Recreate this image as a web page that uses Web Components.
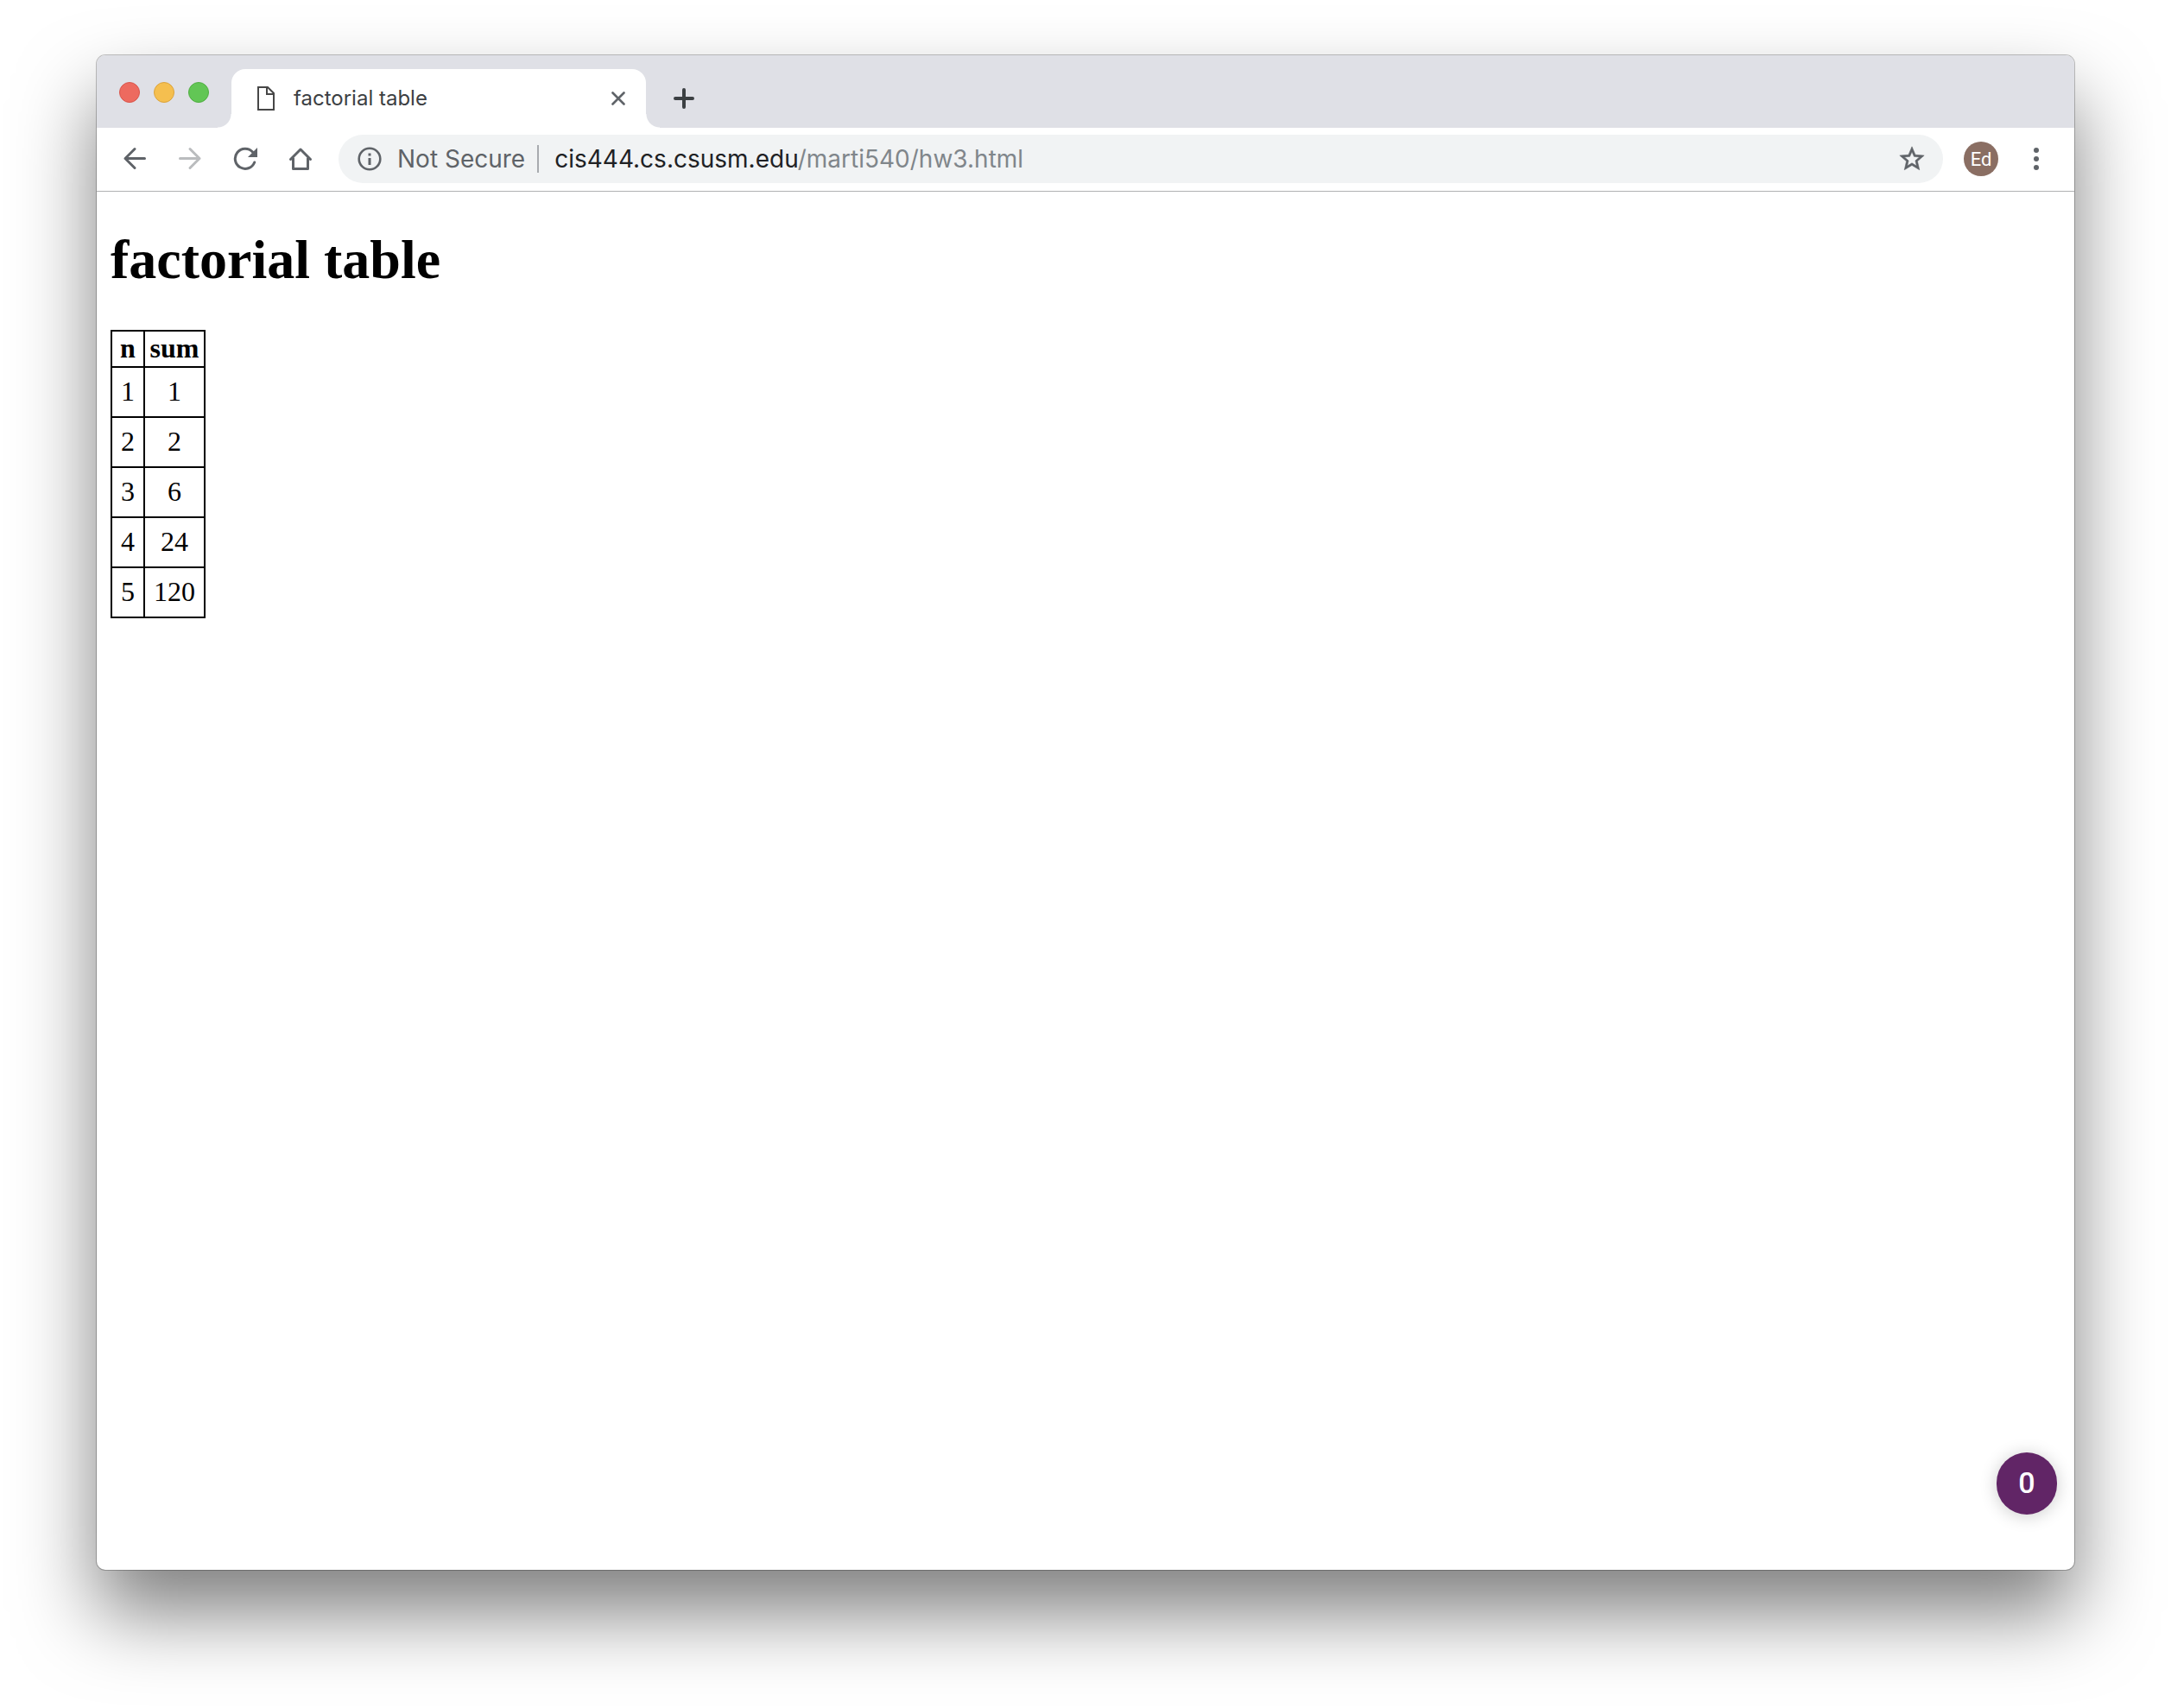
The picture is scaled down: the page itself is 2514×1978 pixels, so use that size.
<!DOCTYPE html>
<html lang="en">
<head>
<meta charset="utf-8">
<title>factorial table</title>
<style>
  html, body { margin: 0; background: #fff; }
  body { min-height: 100vh; display: flex; }
</style>
</head>
<body>
<browser-window>
  <tab-strip slot="tabs">
    <browser-tab>factorial table</browser-tab>
  </tab-strip>
  <tool-bar slot="toolbar">
    <address-bar>
      <span slot="status">Not Secure</span>
      <span slot="host">cis444.cs.csusm.edu</span>
      <span slot="path">/marti540/hw3.html</span>
    </address-bar>
  </tool-bar>
  <factorial-page count="5">factorial table</factorial-page>
  <count-badge slot="overlay">0</count-badge>
</browser-window>

<script>
const define = (name, html, setup) => {
  const template = document.createElement('template');
  template.innerHTML = html;
  customElements.define(name, class extends HTMLElement {
    constructor() {
      super();
      this.attachShadow({ mode: 'open' }).append(template.content.cloneNode(true));
    }
    connectedCallback() { if (setup) setup(this, this.shadowRoot); }
  });
};

define('browser-window', `
  <style>
    :host { flex: 1; display: flex; box-sizing: border-box; padding: 64px 112px 160px; font-family: Inter, "Liberation Sans", sans-serif; }
    .frame { position: relative; flex: 1; min-width: 0; display: flex; flex-direction: column; background: #fff; border-radius: 10px;
      box-shadow: 0 0 0 1px rgba(0,0,0,.24), 0 50px 90px rgba(0,0,0,.5); }
    main { flex: 1; }
    .overlay { position: absolute; right: 20px; bottom: 64px; }
  </style>
  <div class="frame">
    <slot name="tabs"></slot>
    <slot name="toolbar"></slot>
    <main><slot></slot></main>
    <div class="overlay"><slot name="overlay"></slot></div>
  </div>`);

define('tab-strip', `
  <style>
    :host { display: flex; align-items: flex-end; height: 84px; background: #dfe0e6; border-radius: 10px 10px 0 0; }
    .lights { align-self: center; display: flex; gap: 16px; padding: 2px 26px 0; }
    .lights button { width: 24px; height: 24px; padding: 0; border: 1px solid; border-radius: 50%; }
    .close { background: #ed6a5f; border-color: #d9554b !important; }
    .min { background: #f5bf4f; border-color: #dba33c !important; }
    .max { background: #62c655; border-color: #50ae42 !important; }
    .new { width: 56px; height: 68px; margin: 0 16px; padding: 0; border: 0; background: none; }
    svg { display: block; margin: auto; }
  </style>
  <div class="lights">
    <button class="close" aria-label="Close window"></button>
    <button class="min" aria-label="Minimize window"></button>
    <button class="max" aria-label="Zoom window"></button>
  </div>
  <slot></slot>
  <button class="new" aria-label="New tab">
    <svg width="24" height="24" viewBox="0 0 24 24" fill="none" stroke="#3c4043" stroke-width="4" stroke-linecap="round"><path d="M12 2v20M2 12h20"/></svg>
  </button>`);

define('browser-tab', `
  <style>
    :host { position: relative; display: flex; align-items: center; box-sizing: border-box; width: 480px; height: 68px; padding: 0 24px 0 30px;
      background: #fff; border-radius: 16px 16px 0 0; color: #3c4043; font-size: 24px; line-height: 32px; }
    :host::before, :host::after { content: ""; position: absolute; bottom: 0; width: 16px; height: 16px; }
    :host::before { right: 100%; background: radial-gradient(circle at 0 0, transparent 15px, #fff 16px); }
    :host::after { left: 100%; background: radial-gradient(circle at 100% 0, transparent 15px, #fff 16px); }
    .title { flex: 1; padding-left: 22px; }
    button { width: 16px; height: 16px; padding: 0; border: 0; background: none; }
    svg { display: block; }
  </style>
  <svg width="20" height="28" viewBox="0 0 20 28" fill="none" stroke="#474747" stroke-width="2"><path d="M1 1h11l7 7v19H1zM11 1v8h8"/></svg>
  <span class="title"><slot></slot></span>
  <button aria-label="Close tab">
    <svg width="16" height="16" viewBox="0 0 16 16" fill="none" stroke="#5f6368" stroke-width="2.600" stroke-linecap="round"><path d="M1.500 1.500l13 13M14.500 1.500l-13 13"/></svg>
  </button>`);

define('tool-bar', `
  <style>
    :host { display: flex; align-items: center; gap: 12px; height: 72px; padding: 0 12px 1px; background: #fff; border-bottom: 1px solid #b0b1b3; }
    nav { display: flex; }
    button { width: 64px; height: 56px; padding: 0; border: 0; background: none; display: flex; align-items: center; justify-content: center; font: inherit; }
    svg { display: block; fill: none; stroke: #5f6368; stroke-width: 3; }
    .off svg { stroke: #babcbe; }
    .avatar { width: 40px; height: 40px; line-height: 42px; border-radius: 50%; background: #8a6e63; color: #fff; font-family: Roboto, sans-serif; font-size: 22px; text-align: center; }
  </style>
  <nav>
    <button aria-label="Back"><svg width="28" height="28" viewBox="0 0 28 28" stroke-linecap="round" stroke-linejoin="round"><path d="M25.500 13.500H3M14 2.500L3 13.500l11 11"/></svg></button>
    <button class="off" aria-label="Forward"><svg width="28" height="28" viewBox="0 0 28 28" stroke-linecap="round" stroke-linejoin="round"><path d="M2.500 13.500H25M14 2.500l11 11-11 11"/></svg></button>
    <button aria-label="Reload"><svg width="28" height="28" viewBox="0 0 28 28" stroke-linecap="round"><path d="M24.700 18A11.600 11.600 0 1 1 22.500 6"/><path d="M28 1v11H17z" fill="#5f6368" stroke="none"/></svg></button>
    <button aria-label="Home"><svg width="28" height="28" viewBox="0 0 28 28" stroke-linecap="round" stroke-linejoin="round"><path d="M5.500 13.500v12h17v-12M2.500 14.500L14 3l11.500 11.500"/></svg></button>
  </nav>
  <slot></slot>
  <nav>
    <button aria-label="Profile"><span class="avatar">Ed</span></button>
    <button aria-label="Menu"><svg width="28" height="28" viewBox="0 0 28 28"><g fill="#5f6368" stroke="none"><circle cx="14" cy="4" r="3"/><circle cx="14" cy="14" r="3"/><circle cx="14" cy="24" r="3"/></g></svg></button>
  </nav>`);

define('address-bar', `
  <style>
    :host { flex: 1; min-width: 0; display: flex; align-items: center; box-sizing: border-box; height: 56px; padding: 0 19px 0 22px; background: #f1f3f4; border-radius: 28px; font-size: 28px; line-height: 36px; }
    button { display: flex; align-items: center; padding: 0; border: 0; background: none; font: inherit; color: #5f6368; white-space: nowrap; }
    .site { gap: 18px; padding-right: 14px; }
    .rule { width: 2px; height: 32px; background: #a8abaf; }
    .url { flex: 1; padding-left: 18px; color: #202124; white-space: nowrap; outline: 0; }
    .path { color: #80868b; }
    svg { display: block; }
  </style>
  <button class="site" aria-label="Site information: Not Secure">
    <svg width="28" height="28" viewBox="0 0 28 28" fill="#5f6368"><circle cx="14" cy="14" r="12.300" fill="none" stroke="#5f6368" stroke-width="2.600"/><path d="M12.500 7.500h3v3h-3zM12.500 13h3v8h-3z"/></svg>
    <slot name="status"></slot>
  </button>
  <span class="rule"></span>
  <div class="url" role="textbox" contenteditable="true" spellcheck="false" aria-label="Address"><slot name="host"></slot><span class="path"><slot name="path"></slot></span></div>
  <button aria-label="Bookmark this page">
    <svg width="34" height="34" viewBox="0 0 24 24" fill="#5f6368" stroke="#5f6368" stroke-width=".4"><path d="M22 9.240l-7.190-.620L12 2 9.190 8.630 2 9.240l5.460 4.730L5.820 21 12 17.270 18.180 21l-1.630-7.030L22 9.240zM12 15.400l-3.760 2.270 1-4.280-3.320-2.880 4.380-.380L12 6.100l1.710 4.040 4.380.380-3.320 2.880 1 4.280L12 15.400z"/></svg>
  </button>`);

define('factorial-page', `
  <style>
    :host { display: flow-root; padding: 0 16px; color: #000; font-family: "Liberation Serif", serif; font-size: 32px; line-height: 36px; }
    h1 { margin: 42px 0 44px; font-size: 64px; line-height: 74px; }
    table { border-collapse: collapse; text-align: center; }
    th, td { border: 2px solid #000; }
    th { padding: 1px 2px 3px; }
    td { padding: 9px 10px 11px; }
  </style>
  <h1><slot></slot></h1>
  <table>
    <thead><tr><th scope="col">n</th><th scope="col">sum</th></tr></thead>
    <tbody></tbody>
  </table>`, (host, root) => {
  const body = root.querySelector('tbody');
  body.replaceChildren();
  let product = 1;
  for (let n = 1; n <= Number(host.getAttribute('count')); n++) {
    product *= n;
    const row = body.insertRow();
    row.insertCell().textContent = n;
    row.insertCell().textContent = product;
  }
});

define('count-badge', `
  <style>
    :host { display: block; }
    button { display: block; width: 70px; height: 72px; padding: 0 0 2px; border: 0; border-radius: 36px; background: #612566; color: #fff;
      font-family: Roboto, sans-serif; font-size: 34px; font-weight: 500; line-height: 70px; box-shadow: 0 2px 20px rgba(0,0,0,.2); }
  </style>
  <button><slot></slot></button>`);
</script>
</body>
</html>
